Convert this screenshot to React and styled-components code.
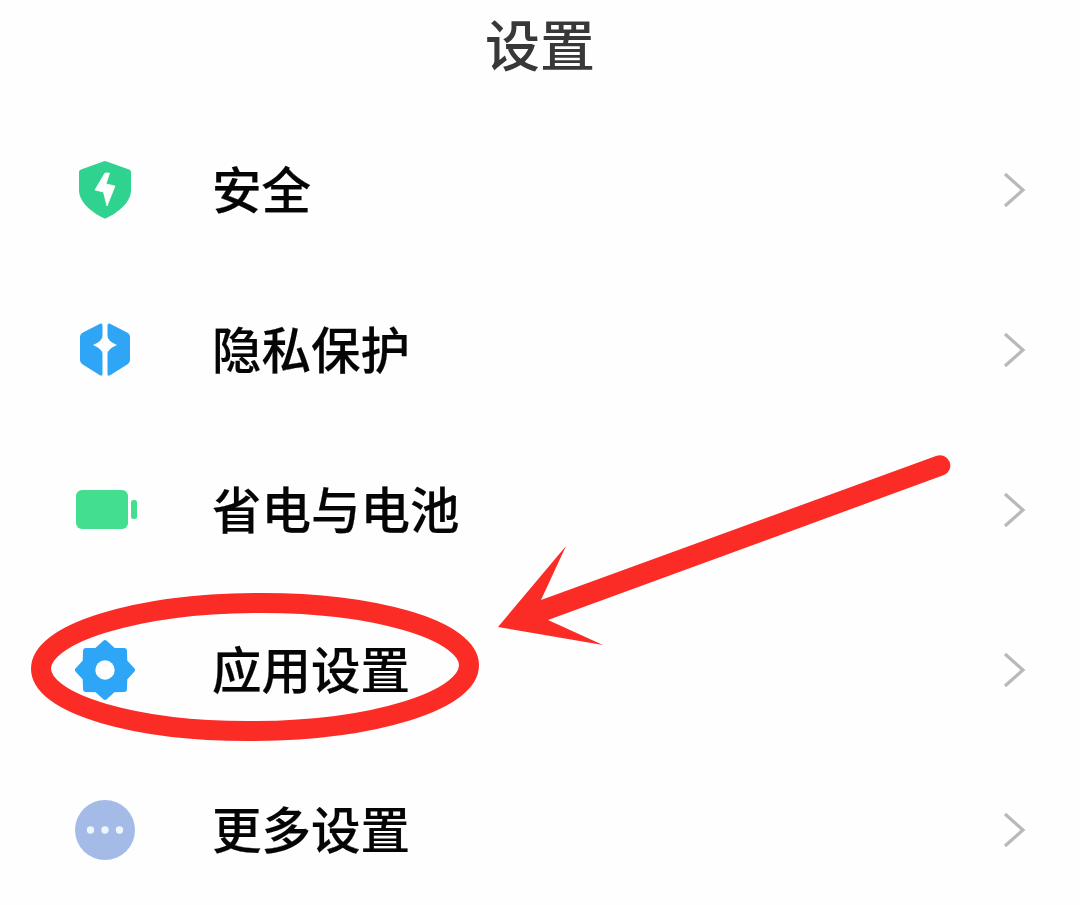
import React from "react";
import styled, { createGlobalStyle } from "styled-components";

const Global = createGlobalStyle`
  html, body { margin: 0; padding: 0; background: #fff; }
  body { font-family: "Noto Sans CJK SC", "Liberation Sans", sans-serif; }
`;

const Screen = styled.div`
  position: relative;
  width: 1080px;
  height: 905px;
  overflow: hidden;
  background: #fefefe;
`;

const Header = styled.h1`
  margin: 0;
  height: 110px;
  padding-bottom: 26px;
  box-sizing: border-box;
  display: flex;
  align-items: center;
  justify-content: center;
  font-size: 55px;
  font-weight: 500;
  color: #383838;
`;

const List = styled.ul`
  margin: 0;
  padding: 0;
  list-style: none;
`;

const Row = styled.li`
  height: 160px;
  display: flex;
  align-items: center;
  padding: 0 52px 0 75px;
`;

const IconSlot = styled.span`
  width: 64px;
  height: 64px;
  flex: none;
  display: flex;
`;

const Label = styled.span`
  flex: 1;
  margin-left: 73px;
  padding-bottom: 4px;
  font-size: 49.5px;
  font-weight: 500;
  line-height: 1;
  color: #050505;
  -webkit-text-stroke: 0.2px #050505;
`;

const Chevron = styled.svg`
  width: 26px;
  height: 38px;
  flex: none;
`;

const Annotation = styled.svg`
  position: absolute;
  inset: 0;
  pointer-events: none;
`;

const Shield = () => (
  <svg width="64" height="64" viewBox="0 0 64 64">
    <path d="M29 3.300Q30 3 31 3.300L54 11.500Q56 12.300 56 14V32C56 44 44 54 31 60.300Q30 60.700 29 60.300C16 54 4 44 4 32V14Q4 12.300 6 11.500Z" fill="#30d28f" />
    <path d="M30 15 20 32 28.500 34 32 48 40 28 31 26 34.500 15Z" fill="#fff" stroke="#fff" strokeWidth="0.8" strokeLinejoin="round" />
  </svg>
);

const Hexagon = () => (
  <svg width="64" height="64" viewBox="0 0 64 64">
    <path d="M27.500 8Q27.500 4.500 24.500 6L7 15Q5 16.500 5 19V42Q5 44.500 7 46L24.500 57Q27.500 59 27.500 56V36Q27.500 31 18 27Q27.500 23 27.500 18Z" fill="#2fa5f5" />
    <path d="M32.500 8Q32.500 4.500 35.500 6L53 15Q55 16.500 55 19V42Q55 44.500 53 46L35.500 57Q32.500 59 32.500 56V36Q32.500 31 42 27Q32.500 23 32.500 18Z" fill="#2fa5f5" />
  </svg>
);

const Battery = () => (
  <svg width="64" height="64" viewBox="0 0 64 64">
    <rect x="1" y="12" width="52" height="39" rx="6" fill="#43df8f" />
    <rect x="56" y="22" width="6" height="19" rx="2.5" fill="#43df8f" />
  </svg>
);

const gearPoints = Array.from({ length: 16 }, (_, i) => {
  const angle = (i * Math.PI) / 8 - Math.PI / 2;
  const radius = i % 2 === 0 ? 27.5 : 21.5;
  return `${(30 + radius * Math.cos(angle)).toFixed(2)},${(32 + radius * Math.sin(angle)).toFixed(2)}`;
}).join(" ");

const Gear = () => (
  <svg width="64" height="64" viewBox="0 0 64 64">
    <polygon points={gearPoints} fill="#2ea6f7" stroke="#2ea6f7" strokeWidth="5" strokeLinejoin="round" />
    <circle cx="30" cy="32" r="9.700" fill="#fefefe" />
  </svg>
);

const More = () => (
  <svg width="64" height="64" viewBox="0 0 64 64">
    <circle cx="30" cy="32" r="30" fill="#a4bbe8" />
    <circle cx="15.500" cy="32" r="3.700" fill="#eef6fc" />
    <circle cx="30" cy="32" r="3.700" fill="#eef6fc" />
    <circle cx="44.500" cy="32" r="3.700" fill="#eef6fc" />
  </svg>
);

const items = [
  { label: "安全", Icon: Shield },
  { label: "隐私保护", Icon: Hexagon },
  { label: "省电与电池", Icon: Battery },
  { label: "应用设置", Icon: Gear },
  { label: "更多设置", Icon: More },
];

export default function App() {
  return (
    <Screen>
      <Global />
      <Header>设置</Header>
      <List>
        {items.map(({ label, Icon }) => (
          <Row key={label}>
            <IconSlot><Icon /></IconSlot>
            <Label>{label}</Label>
            <Chevron viewBox="0 0 26 38">
              <path d="M3 3 21 19 3 35" fill="none" stroke="#b8b8b8" strokeWidth="3.200" />
            </Chevron>
          </Row>
        ))}
      </List>
      <Annotation width="1080" height="905" viewBox="0 0 1080 905">
        <ellipse cx="255" cy="667" rx="214" ry="64" fill="none" stroke="#fb2b26" strokeWidth="20" transform="rotate(-0.5 255 667)" />
        <path
          fill="#fb2b26"
          d="M498 627 566 546 541 600 936 456A10 10 0 0 1 944 475L548 620 603 645Z"
        />
      </Annotation>
    </Screen>
  );
}
